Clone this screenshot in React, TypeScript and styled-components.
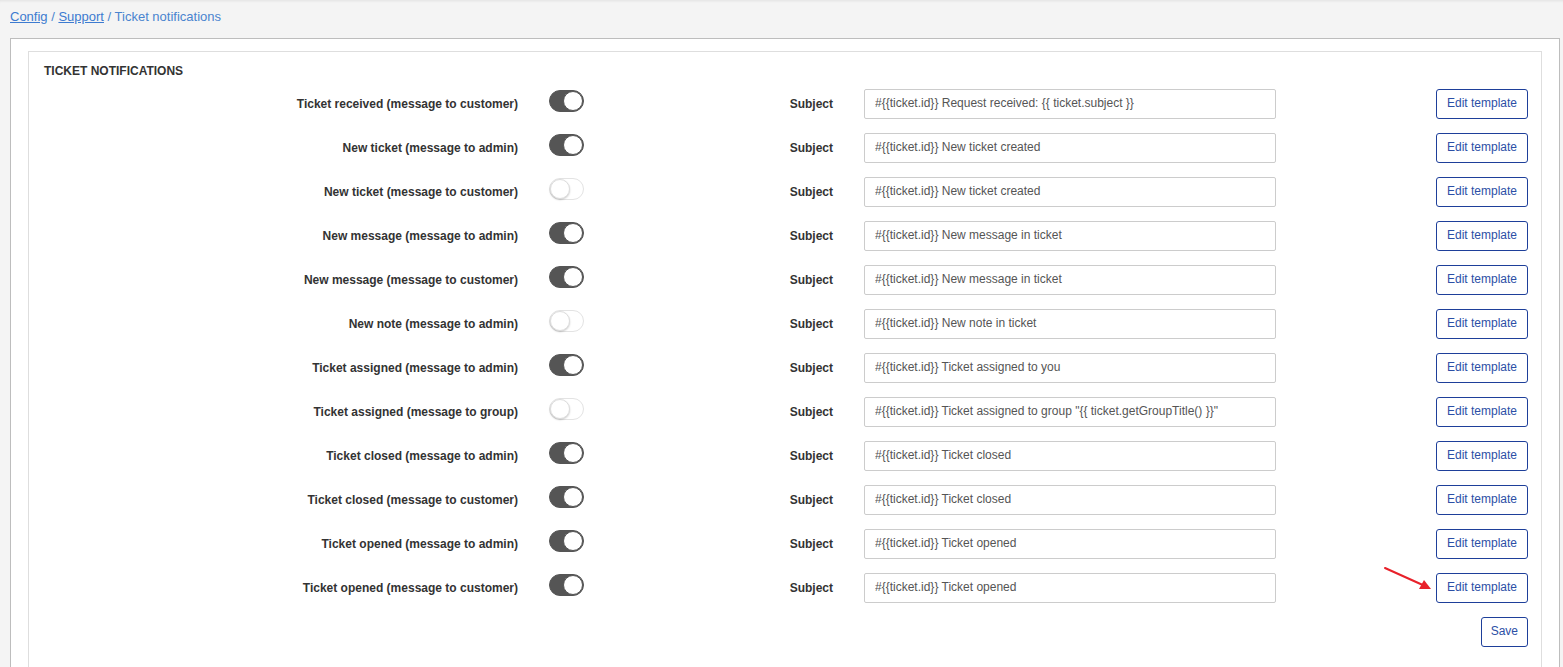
import React from "react";
import styled, { createGlobalStyle } from "styled-components";

const Global = createGlobalStyle`
  html, body { margin: 0; padding: 0; }
  body {
    background: #f4f4f4;
    font-family: "Liberation Sans", Arial, Helvetica, sans-serif;
    font-size: 12px;
    color: #333;
  }
`;

const Page = styled.div`
  position: relative;
  height: 667px;
  overflow: hidden;
  display: flex;
  flex-direction: column;
  box-shadow: inset 0 3px 3px -2px rgba(0,0,0,0.08);
  padding: 8px 3px 0 10px;
  box-sizing: border-box;
`;

const Crumbs = styled.div`
  font-size: 13px;
  color: #4a84cf;
  height: 18px;
  line-height: 18px;
  margin-bottom: 12px;
  a { color: #3d7bd0; text-decoration: underline; }
`;

const Outer = styled.div`
  flex: 1;
  display: flex;
  flex-direction: column;
  background: #fff;
  border: 1px solid #bdbdbd;
  border-bottom: none;
  padding: 12px 17px 0 17px;
`;

const Inner = styled.div`
  flex: 1;
  border: 1px solid #dedede;
  border-bottom: none;
  padding: 12px 13px 0 15px;
`;

const Title = styled.h3`
  margin: 0 0 4px 0;
  font-size: 12px;
  font-weight: 700;
  color: #333;
  line-height: 14px;
`;

const Row = styled.div`
  display: flex;
  align-items: center;
  height: 44px;
`;

const Label = styled.div`
  width: 474px;
  text-align: right;
  font-weight: 700;
  font-size: 12px;
  color: #333;
`;

const ToggleCell = styled.div`
  width: 200px;
  margin-left: 31px;
  display: flex;
  align-items: center;
`;

const Track = styled.span<{ $on: boolean }>`
  position: relative;
  display: inline-block;
  width: 35px;
  height: 22px;
  border-radius: 11px;
  box-sizing: border-box;
  background: ${p => (p.$on ? "#555" : "#fff")};
  border: 1px solid ${p => (p.$on ? "#555" : "#e3e3e3")};
  margin-top: -6px;
`;

const Knob = styled.span<{ $on: boolean }>`
  position: absolute;
  top: 0px;
  left: ${p => (p.$on ? "13px" : "0px")};
  width: 20px;
  height: 20px;
  border-radius: 50%;
  background: #fff;
  box-sizing: border-box;
  border: 1px solid ${p => (p.$on ? "#555" : "#ddd")};
  box-shadow: ${p => (p.$on ? "none" : "0 1px 2px rgba(0,0,0,0.2)")};
`;

const SubjectLabel = styled.div`
  width: 84px;
  text-align: right;
  font-weight: 700;
  font-size: 12px;
  color: #333;
`;

const Input = styled.input`
  margin-left: 31px;
  width: 412px;
  height: 30px;
  box-sizing: border-box;
  border: 1px solid #ccc;
  border-radius: 2px;
  padding: 0 10px 2px 10px;
  font-family: "Liberation Sans", Arial, Helvetica, sans-serif;
  font-size: 12px;
  color: #555;
  outline: none;
`;

const Actions = styled.div`
  flex: 1;
  display: flex;
  justify-content: flex-end;
`;

const Button = styled.button`
  position: relative;
  height: 30px;
  padding: 0 10px 2px 10px;
  background: #fff;
  border: 1px solid #1e3f9a;
  border-radius: 3px;
  color: #2c4fa6;
  font-family: "Liberation Sans", Arial, Helvetica, sans-serif;
  font-size: 12px;
  cursor: pointer;
`;

const SaveButton = styled(Button)`
  padding: 0 9px 2px 9px;
`;

const Footer = styled.div`
  display: flex;
  justify-content: flex-end;
  margin-top: 7px;
`;

const Arrow = styled.svg`
  position: absolute;
  left: -54px;
  top: -8px;
  width: 52px;
  height: 30px;
  overflow: visible;
`;

const rows: [string, boolean, string][] = [
  ["Ticket received (message to customer)", true, "#{{ticket.id}} Request received: {{ ticket.subject }}"],
  ["New ticket (message to admin)", true, "#{{ticket.id}} New ticket created"],
  ["New ticket (message to customer)", false, "#{{ticket.id}} New ticket created"],
  ["New message (message to admin)", true, "#{{ticket.id}} New message in ticket"],
  ["New message (message to customer)", true, "#{{ticket.id}} New message in ticket"],
  ["New note (message to admin)", false, "#{{ticket.id}} New note in ticket"],
  ["Ticket assigned (message to admin)", true, "#{{ticket.id}} Ticket assigned to you"],
  ["Ticket assigned (message to group)", false, "#{{ticket.id}} Ticket assigned to group \"{{ ticket.getGroupTitle() }}\""],
  ["Ticket closed (message to admin)", true, "#{{ticket.id}} Ticket closed"],
  ["Ticket closed (message to customer)", true, "#{{ticket.id}} Ticket closed"],
  ["Ticket opened (message to admin)", true, "#{{ticket.id}} Ticket opened"],
  ["Ticket opened (message to customer)", true, "#{{ticket.id}} Ticket opened"],
];

export default function App() {
  return (
    <>
      <Global />
      <Page>
        <Crumbs>
          <a href="#">Config</a> / <a href="#">Support</a> / Ticket notifications
        </Crumbs>
        <Outer>
          <Inner>
            <Title>TICKET NOTIFICATIONS</Title>
            {rows.map(([label, on, subject], i) => (
              <Row key={i}>
                <Label>{label}</Label>
                <ToggleCell>
                  <Track $on={on}>
                    <Knob $on={on} />
                  </Track>
                </ToggleCell>
                <SubjectLabel>Subject</SubjectLabel>
                <Input defaultValue={subject} />
                <Actions>
                  <Button>
                    Edit template
                    {i === rows.length - 1 && (
                      <Arrow viewBox="0 0 52 30">
                        <line x1="2" y1="2" x2="42" y2="20" stroke="#e8212a" strokeWidth="2" strokeLinecap="round" />
                        <polygon points="48,23 36,23 41,14" fill="#e8212a" />
                      </Arrow>
                    )}
                  </Button>
                </Actions>
              </Row>
            ))}
            <Footer>
              <SaveButton>Save</SaveButton>
            </Footer>
          </Inner>
        </Outer>
      </Page>
    </>
  );
}
